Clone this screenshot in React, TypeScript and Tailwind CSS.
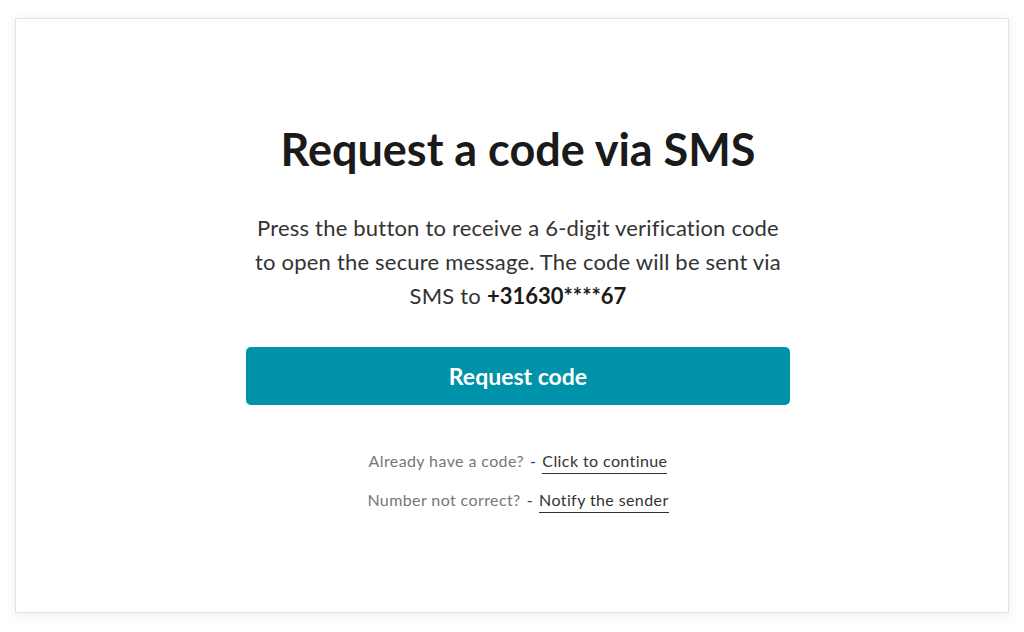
import React from "react";

export default function App() {
  return (
    <div className="w-[1024px] h-[632px] bg-white pt-[18px] pl-[15px]" style={{ fontFamily: "Lato, 'Open Sans', sans-serif" }}>
      <div className="w-[994px] h-[595px] border border-[#e2e2e2] bg-white shadow-[0_2px_12px_rgba(0,0,0,0.08)] flex flex-col items-center pl-[12px] pt-[104px]">
        <h1 className="text-[45px] leading-[52px] font-bold text-[#1a1a1a]">Request a code via SMS</h1>
        <p className="mt-[36px] w-[530px] text-center text-[22px] leading-[34px] tracking-[0.2px] text-[#333333]">
          Press the button to receive a 6-digit verification code to open the secure message. The code will be sent via SMS to <span className="font-bold text-[#1a1a1a] tracking-normal">+31630****67</span>
        </p>
        <button className="mt-[34px] w-[544px] h-[58px] rounded-[5px] bg-[#0092a8] text-white text-[23px] font-bold">Request code</button>
        <div className="mt-[44px] flex flex-col items-center gap-[14px] text-[16px] tracking-[0.4px]">
          <div className="flex items-baseline">
            <span className="text-[#777777]">Already have a code?</span>
            <span className="mx-[6px] text-[#333333]">-</span>
            <a className="text-[#333333] border-b border-[#333333] pb-[1px] leading-[22px]">Click to continue</a>
          </div>
          <div className="flex items-baseline">
            <span className="text-[#777777]">Number not correct?</span>
            <span className="mx-[6px] text-[#333333]">-</span>
            <a className="text-[#333333] border-b border-[#333333] pb-[1px] leading-[22px]">Notify the sender</a>
          </div>
        </div>
      </div>
    </div>
  );
}
